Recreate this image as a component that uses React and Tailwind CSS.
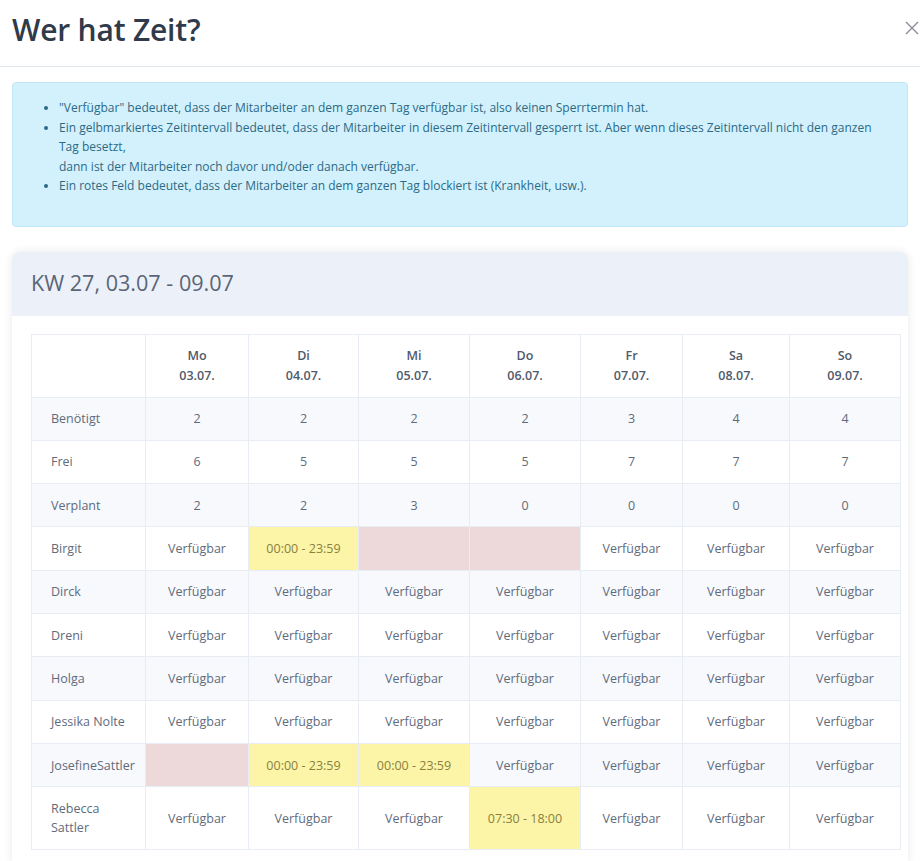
import React from "react";

const days = [
  ["Mo", "03.07."],
  ["Di", "04.07."],
  ["Mi", "05.07."],
  ["Do", "06.07."],
  ["Fr", "07.07."],
  ["Sa", "08.07."],
  ["So", "09.07."],
];

const widths = [114, 103, 110, 111, 111, 102, 107, 111];

const V = "Verfügbar";
const Y = (t) => ({ t, c: "y" });
const R = { t: "", c: "r" };

const rows = [
  ["Benötigt", ["2", "2", "2", "2", "3", "4", "4"]],
  ["Frei", ["6", "5", "5", "5", "7", "7", "7"]],
  ["Verplant", ["2", "2", "3", "0", "0", "0", "0"]],
  ["Birgit", [V, Y("00:00 - 23:59"), R, R, V, V, V]],
  ["Dirck", [V, V, V, V, V, V, V]],
  ["Dreni", [V, V, V, V, V, V, V]],
  ["Holga", [V, V, V, V, V, V, V]],
  ["Jessika Nolte", [V, V, V, V, V, V, V]],
  ["JosefineSattler", [R, Y("00:00 - 23:59"), Y("00:00 - 23:59"), V, V, V, V]],
  ["Rebecca Sattler", [V, V, V, Y("07:30 - 18:00"), V, V, V]],
];

export default function App() {
  return (
    <div
      className="min-h-[861px] w-[920px] bg-white text-[12.5px]"
      style={{ fontFamily: '"Open Sans", "Noto Sans", sans-serif' }}
    >
      <div className="flex h-[67px] items-center justify-between border-b border-[#dfe6ee] pl-3 pr-0">
        <h1 className="mb-[7px] text-[30px] font-semibold tracking-[-0.2px] text-[#2f3a4a]">
          Wer hat Zeit?
        </h1>
        <svg width="14" height="14" viewBox="0 0 14 14" className="mb-[11px] mr-[1px]">
          <path d="M1 1 L13 13 M13 1 L1 13" stroke="#8a8f96" strokeWidth="1.4" />
        </svg>
      </div>

      <div className="mx-3 mt-[15px] rounded-[4px] border border-[#bfe7f7] bg-[#d3f1fd] px-4 pt-[15px] pb-[14px] text-[12px] leading-[19.5px] text-[#2b6a85]">
        <ul className="mb-4 list-disc pl-[30px] marker:text-[#2b6a85]">
          <li>"Verfügbar" bedeutet, dass der Mitarbeiter an dem ganzen Tag verfügbar ist, also keinen Sperrtermin hat.</li>
          <li>
            Ein gelbmarkiertes Zeitintervall bedeutet, dass der Mitarbeiter in diesem Zeitintervall gesperrt ist. Aber wenn dieses Zeitintervall nicht den ganzen
            <br />
            Tag besetzt,
            <br />
            dann ist der Mitarbeiter noch davor und/oder danach verfügbar.
          </li>
          <li>Ein rotes Feld bedeutet, dass der Mitarbeiter an dem ganzen Tag blockiert ist (Krankheit, usw.).</li>
        </ul>
      </div>

      <div className="mx-3 mt-[25px] rounded-t-[8px] bg-white shadow-[0_0_10px_rgba(0,0,0,0.09)]">
        <div className="flex h-[64px] items-center rounded-t-[8px] bg-[#ecf1f9] px-[19px]">
          <h2 className="text-[21.6px] text-[#5a6577]">KW 27, 03.07 - 09.07</h2>
        </div>
        <div className="px-[19px] pt-[18px] pb-[13px]">
          <table className="w-[869px] table-fixed border-collapse text-[12.5px] leading-[19px]">
            <colgroup>
              {widths.map((w, i) => (
                <col key={i} style={{ width: w }} />
              ))}
            </colgroup>
            <thead>
              <tr className="bg-white">
                <th className="border border-[#e8edf4] px-3 py-0"></th>
                {days.map(([d, dt]) => (
                  <th
                    key={d}
                    className="h-[63px] border border-[#e8edf4] px-2 py-0 text-center font-semibold leading-[20px] text-[#4f5a6b]"
                  >
                    {d}
                    <br />
                    {dt}
                  </th>
                ))}
              </tr>
            </thead>
            <tbody>
              {rows.map(([name, cells], ri) => (
                <tr
                  key={name}
                  className={(ri % 2 === 0 ? "bg-[#f7f9fd] " : "bg-white ") + (ri === 9 ? "h-[63px]" : "h-[43.3px]")}
                >
                  <td className="border border-[#e8edf4] py-0 pl-[19px] pr-[8px] text-left text-[#5f6b7c]">
                    {name}
                  </td>
                  {cells.map((c, ci) => {
                    if (typeof c === "string") {
                      return (
                        <td
                          key={ci}
                          className="border border-[#e8edf4] px-2 py-0 text-center text-[#5f6b7c]"
                        >
                          {c}
                        </td>
                      );
                    }
                    if (c.c === "y") {
                      return (
                        <td
                          key={ci}
                          className="border border-[#e8edf4] bg-[#fcf5a7] px-2 py-0 text-center text-[#8a8040]"
                        >
                          {c.t}
                        </td>
                      );
                    }
                    return (
                      <td key={ci} className="border border-[#e8edf4] bg-[#eed9da] px-2 py-0"></td>
                    );
                  })}
                </tr>
              ))}
            </tbody>
          </table>
        </div>
      </div>
    </div>
  );
}
